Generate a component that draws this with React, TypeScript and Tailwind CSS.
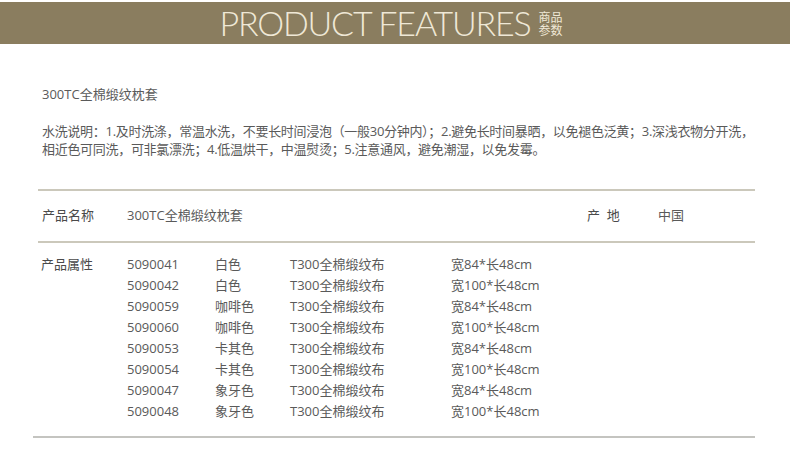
import React from 'react';

interface SpecRow {
  code: string;
  color: string;
  fabric: string;
  size: string;
}

const ROWS: SpecRow[] = [
  { code: '5090041', color: '白色', fabric: 'T300全棉缎纹布', size: '宽84*长48cm' },
  { code: '5090042', color: '白色', fabric: 'T300全棉缎纹布', size: '宽100*长48cm' },
  { code: '5090059', color: '咖啡色', fabric: 'T300全棉缎纹布', size: '宽84*长48cm' },
  { code: '5090060', color: '咖啡色', fabric: 'T300全棉缎纹布', size: '宽100*长48cm' },
  { code: '5090053', color: '卡其色', fabric: 'T300全棉缎纹布', size: '宽84*长48cm' },
  { code: '5090054', color: '卡其色', fabric: 'T300全棉缎纹布', size: '宽100*长48cm' },
  { code: '5090047', color: '象牙色', fabric: 'T300全棉缎纹布', size: '宽84*长48cm' },
  { code: '5090048', color: '象牙色', fabric: 'T300全棉缎纹布', size: '宽100*长48cm' },
];

const cjk = "font-['Open_Sans','Noto_Sans_CJK_SC',sans-serif]";

export default function App() {
  return (
    <div className={`w-[790px] h-[468px] bg-white overflow-hidden ${cjk} text-[13px] text-[#5a5a5a]`}>
      {/* header band */}
      <div className="mt-[2px] h-[42px] bg-[#8a7d5f] flex items-center justify-center">
        <div className="flex items-center gap-[8px] pr-[6px]">
          <span className="font-['Lato',sans-serif] font-light text-[34px] leading-none tracking-[-1.2px] text-[#efe8d6]">
            PRODUCT FEATURES
          </span>
          <p className="w-[26px] font-['Noto_Sans_CJK_SC',sans-serif] text-[12px] leading-[13px] text-[#efe8d6]">
            商品参数
          </p>
        </div>
      </div>

      <div className="pl-[42px] pt-[41px] leading-[18px]">300TC全棉缎纹枕套</div>

      <div className="pl-[42px] pt-[19px] leading-[18px] tracking-[-0.3px]">
        <div>水洗说明：1.及时洗涤，常温水洗，不要长时间浸泡（一般30分钟内）；2.避免长时间暴晒，以免褪色泛黄；3.深浅衣物分开洗，</div>
        <div>相近色可同洗，可非氯漂洗；4.低温烘干，中温熨烫；5.注意通风，避免潮湿，以免发霉。</div>
      </div>

      <div className="ml-[38px] mr-[35px] mt-[31px] h-[2px] bg-[#cbc8bb]" />

      <div className="flex items-center h-[50px] pl-[42px]">
        <span className="w-[85px] text-[#4a4a4a]">产品名称</span>
        <span className="w-[460px]">300TC全棉缎纹枕套</span>
        <span className="w-[71px] text-[#4a4a4a]">产&nbsp;&nbsp;地</span>
        <span>中国</span>
      </div>

      <div className="ml-[38px] mr-[35px] h-[2px] bg-[#cbc8bb]" />

      <div className="flex pl-[41px] pt-[11px]">
        <span className="w-[86px] leading-[21px] text-[#4a4a4a]">产品属性</span>
        <div className="flex flex-col">
          {ROWS.map((row) => (
            <div key={row.code} className="flex leading-[21px]">
              <span className="w-[88px]">{row.code}</span>
              <span className="w-[75px]">{row.color}</span>
              <span className="w-[161px]">{row.fabric}</span>
              <span>{row.size}</span>
            </div>
          ))}
        </div>
      </div>

      <div className="ml-[33px] mr-[35px] mt-[14px] h-[2px] bg-[#c4c4c0]" />
    </div>
  );
}
